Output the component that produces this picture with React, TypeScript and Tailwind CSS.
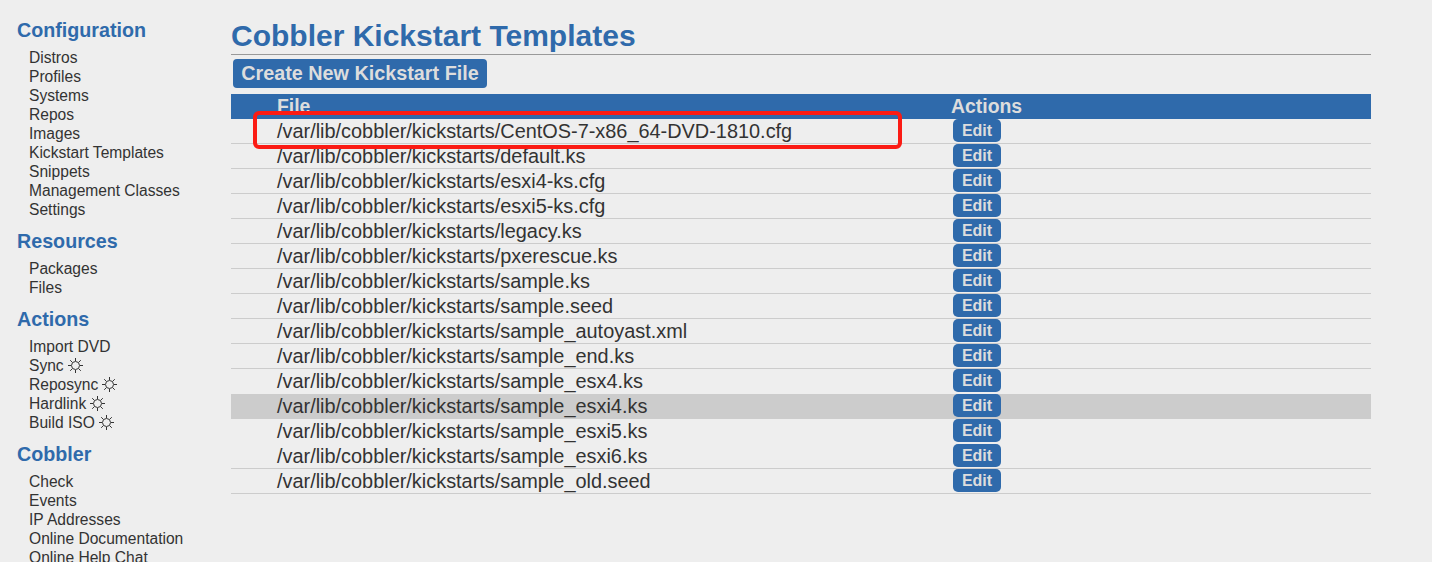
const files = [
  'CentOS-7-x86_64-DVD-1810.cfg',
  'default.ks',
  'esxi4-ks.cfg',
  'esxi5-ks.cfg',
  'legacy.ks',
  'pxerescue.ks',
  'sample.ks',
  'sample.seed',
  'sample_autoyast.xml',
  'sample_end.ks',
  'sample_esx4.ks',
  'sample_esxi4.ks',
  'sample_esxi5.ks',
  'sample_esxi6.ks',
  'sample_old.seed',
];

const nav = [
  {
    title: 'Configuration',
    items: ['Distros', 'Profiles', 'Systems', 'Repos', 'Images', 'Kickstart Templates', 'Snippets', 'Management Classes', 'Settings'],
  },
  { title: 'Resources', items: ['Packages', 'Files'] },
  { title: 'Actions', items: ['Import DVD', 'Sync', 'Reposync', 'Hardlink', 'Build ISO'] },
  { title: 'Cobbler', items: ['Check', 'Events', 'IP Addresses', 'Online Documentation', 'Online Help Chat'] },
];

const withSun = ['Sync', 'Reposync', 'Hardlink', 'Build ISO'];

function Sun() {
  return (
    <svg width="15" height="15" viewBox="0 0 15 15" fill="none" stroke="#333" strokeWidth="1" className="ml-[4px] shrink-0">
      <circle cx="7.5" cy="7.5" r="4" />
      <path d="M7.5 0v3M7.5 12v3M0 7.5h3M12 7.5h3M2.2 2.2l2 2M10.8 10.8l2 2M2.2 12.8l2-2M10.8 4.2l2-2" />
    </svg>
  );
}

function Sidebar() {
  return (
    <div className="w-[231px] shrink-0 pl-[17px] pt-[20px]">
      {nav.map((group) => (
        <div key={group.title} className="mb-[12px]">
          <h2 className="text-[19.7px] leading-[21px] font-bold text-[#2f6aab]">{group.title}</h2>
          <ul className="mt-[7px] pl-[12px]">
            {group.items.map((item) => (
              <li key={item} className="flex items-center h-[19px] text-[15.6px] leading-[19px] text-[#333] whitespace-nowrap">
                {item}
                {withSun.includes(item) && <Sun />}
              </li>
            ))}
          </ul>
        </div>
      ))}
    </div>
  );
}

export default function App() {
  return (
    <div className="h-screen overflow-hidden bg-[#eee] flex font-['Liberation_Sans',Arial,sans-serif]">
      <Sidebar />
      <div className="w-[1140px] pt-[19px] relative">
        <h1 className="text-[30px] leading-[33px] pb-[2px] font-bold text-[#2f6aab] border-b border-[#999]">
          Cobbler Kickstart Templates
        </h1>
        <button className="block mt-[4px] ml-[2px] h-[29px] w-[254px] rounded-[4px] bg-[#2f6aab] text-[#ddd] text-[19.8px] leading-[29px] font-bold text-center">
          Create New Kickstart File
        </button>
        <div className="mt-[6px] h-[25px] bg-[#2f6aab] flex text-[19.4px] leading-[25px] font-bold text-[#ddd]">
          <div className="w-[720px] pl-[46px]">File</div>
          <div>Actions</div>
        </div>
        {files.map((f, i) => (
          <div
            key={f}
            className={
              'h-[25px] flex text-[19.9px] leading-[24px] text-[#333] ' +
              (i === 11 ? 'bg-[#ccc]' : i === 10 || i === 12 ? '' : 'border-b border-[#ccc]')
            }
          >
            <div className="w-[722px] pl-[46px]">/var/lib/cobbler/kickstarts/{f}</div>
            <button className="w-[48px] h-[23px] rounded-[5px] bg-[#2f6aab] text-[#ddd] text-[16px] leading-[23px] font-bold">Edit</button>
          </div>
        ))}
        <div className="absolute left-[22px] top-[111px] w-[649px] h-[38px] border-[4px] border-[#fb1b14] rounded-[6px]" />
      </div>
    </div>
  );
}
